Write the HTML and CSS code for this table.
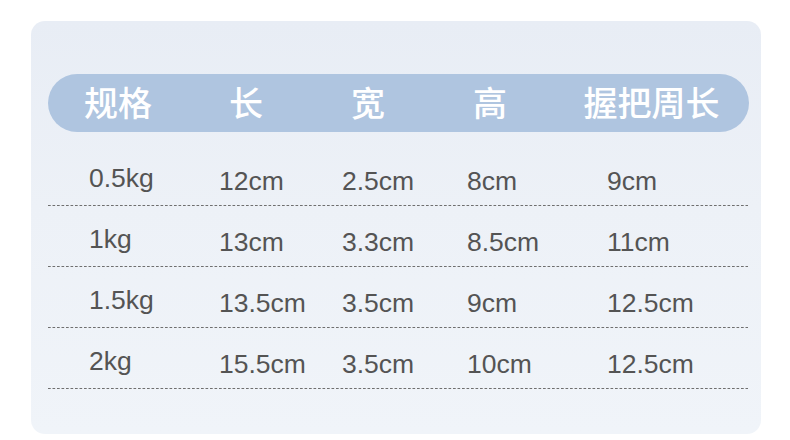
FILE: index.html
```html
<!DOCTYPE html>
<html lang="zh">
<head>
<meta charset="utf-8">
<link rel="stylesheet" href="styles.css">
</head>
<body>
<div class="card">
  <div class="head">
    <div class="hc">规格</div>
    <div class="hc">长</div>
    <div class="hc">宽</div>
    <div class="hc">高</div>
    <div class="hc last">握把周长</div>
  </div>
  <div class="rows">
    <div class="row"><span class="c first">0.5kg</span><span class="c">12cm</span><span class="c">2.5cm</span><span class="c">8cm</span><span class="c">9cm</span></div>
    <div class="row"><span class="c first">1kg</span><span class="c">13cm</span><span class="c">3.3cm</span><span class="c">8.5cm</span><span class="c">11cm</span></div>
    <div class="row"><span class="c first">1.5kg</span><span class="c">13.5cm</span><span class="c">3.5cm</span><span class="c">9cm</span><span class="c">12.5cm</span></div>
    <div class="row"><span class="c first">2kg</span><span class="c">15.5cm</span><span class="c">3.5cm</span><span class="c">10cm</span><span class="c">12.5cm</span></div>
  </div>
</div>
</body>
</html>
```
FILE: styles.css
```css
html, body {
  margin: 0;
  padding: 0;
  background: #ffffff;
}
body {
  width: 790px;
  height: 440px;
  overflow: hidden;
  font-family: "Liberation Sans", "Noto Sans CJK SC", sans-serif;
}
.card {
  margin: 21px 0 0 31px;
  width: 730px;
  height: 413px;
  box-sizing: border-box;
  border-radius: 14px;
  background: linear-gradient(180deg, #e8edf5 0%, #edf1f7 45%, #f0f4f9 100%);
  padding: 53px 12px 0 17px;
}
.head {
  height: 58px;
  border-radius: 29px;
  background: #afc5e0;
  display: grid;
  grid-template-columns: 140px 116px 128px 116px 1fr;
  align-items: center;
  color: #ffffff;
  font-family: "Noto Sans CJK SC", sans-serif;
  font-weight: 500;
  font-size: 34px;
  line-height: 1;
}
.hc {
  text-align: center;
  padding-bottom: 2px;
}
.hc.last {
  padding-left: 6px;
}
.rows {
  margin-top: 13px;
  width: 700px;
}
.row {
  height: 61px;
  box-sizing: border-box;
  display: grid;
  grid-template-columns: 130px 123px 125px 140px 1fr;
  padding: 11px 0 1px 41px;
  align-items: center;
  background-image: linear-gradient(90deg, #6f6f6f 0, #6f6f6f 3px, transparent 3px, transparent 4.5px);
  background-size: 4.5px 1px;
  background-repeat: repeat-x;
  background-position: 0 100%;
  color: #545454;
  font-size: 26.5px;
  line-height: 30px;
}
.c.first {
  padding-bottom: 5px;
}
```
